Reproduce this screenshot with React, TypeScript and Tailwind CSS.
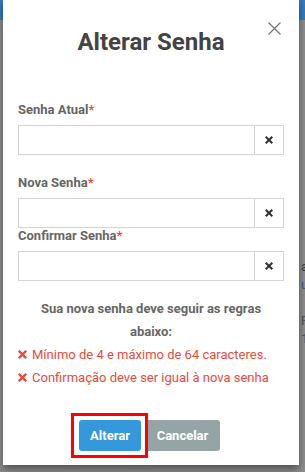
import React from 'react';

function TimesIcon({ className }: { className?: string }) {
  return (
    <svg viewBox="0 0 10 10" className={className} fill="none" stroke="currentColor" strokeWidth={2.6} strokeLinecap="square">
      <path d="M1.8 1.8 L8.2 8.2 M8.2 1.8 L1.8 8.2" />
    </svg>
  );
}

function Field({ label, className }: { label: string; className?: string }) {
  return (
    <div className={className}>
      <label className="block text-[13px] font-bold leading-[15px] text-[#666]">
        {label}
        <span className="text-[#e74c3c]">*</span>
      </label>
      <div className="mt-2 flex h-[30px] border border-[#d4d4d4] bg-white">
        <input type="password" className="min-w-0 flex-1 px-2 text-sm outline-none" />
        <button className="flex w-[29px] items-center justify-center border-l border-[#d4d4d4] text-[#333]">
          <TimesIcon className="h-[8px] w-[8px]" />
        </button>
      </div>
    </div>
  );
}

export default function App() {
  return (
    <div
      className="relative h-[472px] w-[305px] overflow-hidden bg-[#8e8e8e]"
      style={{ fontFamily: 'Roboto, "Liberation Sans", sans-serif' }}
    >
      {/* page behind the overlay */}
      <div className="h-[20px] bg-[#347bbd]" />
      <div className="flex flex-col pl-[301px] pt-[238px] text-[13px] leading-[18px]">
        <span className="text-[#3a3a3a]">a</span>
        <span className="text-[#2c5f8f]">u</span>
        <span className="mt-[18px] text-[#4b5563]">R</span>
        <span className="text-[#2c5f8f]">1</span>
      </div>

      {/* modal */}
      <div className="absolute left-[3px] top-0 h-[465px] w-[296px] bg-white px-[15px] shadow-[0_4px_8px_rgba(0,0,0,0.45)]">
        <button className="absolute right-[18px] top-[22px] text-[#777]">
          <svg viewBox="0 0 13 13" className="h-[13px] w-[13px]" stroke="currentColor" strokeWidth={1.3} fill="none">
            <path d="M0.5 0.5 L12.5 12.5 M12.5 0.5 L0.5 12.5" />
          </svg>
        </button>

        <h2 className="pt-[26px] text-center text-[24px] font-bold leading-[32px] text-[#444]">
          Alterar Senha
        </h2>

        <Field label="Senha Atual" className="mt-[44px]" />
        <Field label="Nova Senha" className="mt-[20px]" />
        <Field label="Confirmar Senha" />

        <p className="mt-[16px] text-center text-[13px] font-bold leading-[23px] text-[#666]">
          Sua nova senha deve seguir as regras
          <br />
          abaixo:
        </p>
        <ul className="whitespace-nowrap text-[13px] leading-[23px] text-[#e74c3c]">
          <li className="flex items-center gap-[5px]">
            <TimesIcon className="h-[9px] w-[9px]" />
            <span>Mínimo de 4 e máximo de 64 caracteres.</span>
          </li>
          <li className="flex items-center gap-[5px]">
            <TimesIcon className="h-[9px] w-[9px]" />
            <span>Confirmação deve ser igual à nova senha</span>
          </li>
        </ul>

        <div className="mt-[31px] flex justify-center gap-[4px] pr-[3px]">
          <div className="relative">
            <button className="h-[31px] w-[62px] rounded-[3px] bg-[#3498db] text-[13px] font-bold text-white">
              Alterar
            </button>
            <div className="pointer-events-none absolute -bottom-[7px] -left-[8px] -right-[7px] -top-[7px] border-[3px] border-[#ff0000]" />
          </div>
          <button className="h-[31px] w-[75px] rounded-[3px] bg-[#95a5a6] text-[13px] font-bold text-white">
            Cancelar
          </button>
        </div>
      </div>
    </div>
  );
}
